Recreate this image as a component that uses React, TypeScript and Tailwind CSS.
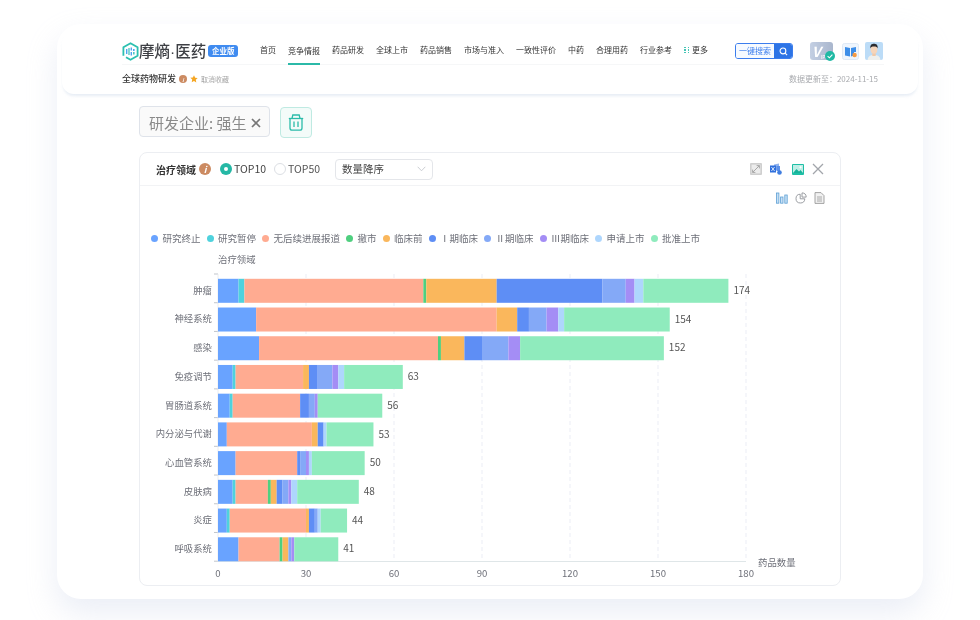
import React from "react";

const C = ["#69a3ff", "#4fd2dd", "#ffab91", "#4fcf7f", "#fab75c", "#5e8ef5", "#84a9f7", "#a48df5", "#aed6fd", "#8febbd"];
const legend = ["研究终止", "研究暂停", "无后续进展报道", "撤市", "临床前", "Ⅰ期临床", "Ⅱ期临床", "Ⅲ期临床", "申请上市", "批准上市"];
const nav = ["首页", "竞争情报", "药品研发", "全球上市", "药品销售", "市场与准入", "一致性评价", "中药", "合理用药", "行业参考"];

const rows: [string, number, number[]][] = [
  ["肿瘤", 174, [7, 2, 61, 1, 24, 36, 8, 3, 3, 29]],
  ["神经系统", 154, [13, 0, 82, 0, 7, 4, 6, 4, 2, 36]],
  ["感染", 152, [14, 0, 61, 1, 8, 6, 9, 4, 0, 49]],
  ["免疫调节", 63, [5, 1, 23, 0, 2, 3, 5, 2, 2, 20]],
  ["胃肠道系统", 56, [4, 1, 23, 0, 0, 3, 2, 1, 0, 22]],
  ["内分泌与代谢", 53, [3, 0, 29, 0, 2, 2, 0, 0, 1, 16]],
  ["心血管系统", 50, [6, 0, 21, 0, 0, 1, 2, 1, 1, 18]],
  ["皮肤病", 48, [5, 1, 11, 1, 2, 2, 2, 1, 2, 21]],
  ["炎症", 44, [3, 1, 26, 0, 1, 2, 1, 0, 1, 9]],
  ["呼吸系统", 41, [7, 0, 14, 1, 2, 0, 1, 1, 0, 15]],
];

const X0 = 218;
const K = 528 / 180;
const T0 = 275;
const P = 28.72;

function Chart() {
  return (
    <svg viewBox="140 248 700 335" className="block h-[335px] w-[700px]">
      <text x="218" y="264" fontSize="9.4" fill="#6e7079">治疗领域</text>
      {[30, 60, 90, 120, 150, 180].map((v) => (
        <line key={v} x1={X0 + v * K} x2={X0 + v * K} y1={T0} y2="562" stroke="#e6e8f2" strokeWidth="0.8" strokeDasharray="4 3" />
      ))}
      {rows.map((_, i) => (
        <line key={i} x1="214" x2="218" y1={T0 + i * P} y2={T0 + i * P} stroke="#a8adb5" strokeWidth="0.7" />
      ))}
      <line x1="214" x2="218" y1="562.2" y2="562.2" stroke="#a8adb5" strokeWidth="0.7" />
      <line x1="218" x2="218" y1={T0} y2="562.5" stroke="#e4e8ec" strokeWidth="0.8" />
      <line x1="218" x2="746" y1="562.5" y2="562.5" stroke="#dfe6e8" strokeWidth="1" />
      {rows.map(([name, total, segs], i) => {
        const top = T0 + i * P + 4.8;
        const cy = top + 11.5;
        let acc = 0;
        return (
          <g key={name}>
            <text x="212" y={cy + 3.4} textAnchor="end" fontSize="9.4" fill="#6e7079">{name}</text>
            {segs.map((s, j) => {
              const x = X0 + acc * K;
              acc += s;
              return s > 0 ? <rect key={j} x={x} y={top} width={s * K} height="24" fill={C[j]} /> : null;
            })}
            <text x={X0 + total * K + 5} y={cy + 3.6} fontSize="10" fill="#555555">{total}</text>
          </g>
        );
      })}
      {[0, 30, 60, 90, 120, 150, 180].map((v) => (
        <text key={v} x={X0 + v * K} y="578" textAnchor="middle" fontSize="9.6" fill="#6e7079">{v}</text>
      ))}
      <text x="758" y="567" fontSize="9.4" fill="#6e7079">药品数量</text>
    </svg>
  );
}

function Logo() {
  return (
    <svg width="17" height="19" viewBox="0 0 17 19" className="shrink-0">
      <path d="M8.5 1.2 15.6 5.3V13.7L8.5 17.8 1.4 13.7V5.3Z" fill="none" stroke="#2cc0b0" strokeWidth="1.8" strokeLinejoin="round" strokeDasharray="30 3 40" />
      <g fill="#4ea4ee">
        <rect x="4" y="7" width="1.4" height="5" />
        <rect x="6.3" y="6" width="1.4" height="7" fill="#4fc9c4" />
        <rect x="8.6" y="5.5" width="1.4" height="3" />
        <rect x="8.6" y="10" width="1.4" height="3.5" />
        <rect x="11" y="7" width="1.6" height="2" />
        <rect x="11" y="10" width="1.6" height="2.5" fill="#4fc9c4" />
      </g>
    </svg>
  );
}

function Vip() {
  return (
    <div className="relative h-[18px] w-[23px]">
      <div className="flex h-[18px] w-[23px] items-end rounded-[3px] bg-gradient-to-r from-[#c3cfe3] to-[#a9b6cd] pl-[2px]">
        <span className="text-[14px] leading-[17px] font-bold italic text-white">V</span>
        <span className="text-[5px] leading-[7px] text-white">IP</span>
      </div>
      <svg width="10" height="10" viewBox="0 0 10 10" className="absolute right-[-2px] bottom-[-1px]">
        <circle cx="5" cy="5" r="5" fill="#1fb9a4" />
        <path d="M2.6 5.1 4.4 6.8 7.4 3.6" fill="none" stroke="#fff" strokeWidth="1.1" />
      </svg>
    </div>
  );
}

function Book() {
  return (
    <svg width="17" height="17" viewBox="0 0 17 17">
      <rect x="0.5" y="0.5" width="16" height="16" rx="2" fill="#eef5fd" stroke="#dfe9f5" />
      <path d="M3 4 8 5V13.5L3 12.5Z" fill="#3d8ee8" />
      <path d="M9 5 14 4V9H12V12.5L9 13.5Z" fill="#3d8ee8" />
      <circle cx="12.6" cy="12" r="2.2" fill="#f59a42" />
    </svg>
  );
}

function Avatar() {
  return (
    <svg width="18" height="18" viewBox="0 0 18 18">
      <rect width="18" height="18" rx="2" fill="#bcdcf7" />
      <path d="M2.5 18c.5-4 3-5 6.5-5s6 1 6.5 5Z" fill="#eef0ee" />
      <rect x="7.3" y="10" width="3.4" height="4" fill="#f0c9a8" />
      <ellipse cx="9" cy="7.5" rx="3.4" ry="4.2" fill="#f6d5ba" />
      <path d="M5.3 6.5C5 2.5 7 1.8 9 1.8s4 .7 3.7 4.7c-.6-1.5-1.5-2-3.7-2s-3.1.5-3.7 2Z" fill="#2b2b2e" />
    </svg>
  );
}

function Info({ size }: { size: number }) {
  return (
    <span
      className="flex shrink-0 items-center justify-center rounded-full bg-[#cc8b62] font-bold italic leading-none text-white"
      style={{ width: size, height: size, fontSize: size - 3 }}
    >
      i
    </span>
  );
}

function TopIcons() {
  return (
    <div className="flex items-center">
      <svg width="12" height="12" viewBox="0 0 12 12">
        <rect width="12" height="12" rx="1" fill="#cfcfcf" />
        <rect x="1.6" y="1.6" width="8.8" height="8.8" fill="#ececec" />
        <path d="M2.6 9.4 9.4 2.6" stroke="#a8a8a8" strokeWidth="1" />
        <path d="M6.6 2.6h2.8v2.8M5.4 9.4H2.6V6.6" fill="none" stroke="#a8a8a8" strokeWidth="1" />
      </svg>
      <svg width="12" height="12" viewBox="0 0 12 12" className="ml-[8px]">
        <path d="M4 1.5 9 0.5V7H4Z" fill="#8fb2ee" />
        <rect x="0" y="2.5" width="6" height="7" fill="#2f6fdc" />
        <path d="M1.4 4 4.6 8M4.6 4 1.4 8" stroke="#fff" strokeWidth="0.8" />
        <rect x="6.5" y="3" width="3.5" height="5" fill="#5b8fe8" />
        <circle cx="9.5" cy="9.5" r="2.3" fill="#3f7de0" />
      </svg>
      <svg width="12" height="11" viewBox="0 0 12 11" className="ml-[10px]">
        <rect width="12" height="11" rx="1" fill="#1ebfa6" />
        <rect x="1" y="1" width="10" height="8" fill="#bfeee6" />
        <path d="M1 9 4.5 5 7 7.5 8.5 6 11 9Z" fill="#17b39a" />
        <circle cx="8.5" cy="3.3" r="1.1" fill="#fff" />
      </svg>
      <svg width="12" height="12" viewBox="0 0 12 12" className="ml-[8px]">
        <path d="M1 1 11 11M11 1 1 11" stroke="#a2a5ab" strokeWidth="1.3" />
      </svg>
    </div>
  );
}

function ViewIcons() {
  return (
    <div className="flex items-center justify-end gap-[7px] pr-[15px] pt-[6px] pb-0">
      <svg width="12" height="12" viewBox="0 0 12 12">
        <rect x="0.5" y="1" width="2.4" height="10.2" fill="#c6e0f5" stroke="#5c9fd4" strokeWidth="0.8" />
        <rect x="4.6" y="5" width="2.4" height="6.2" fill="#c6e0f5" stroke="#5c9fd4" strokeWidth="0.8" />
        <rect x="8.8" y="3" width="2.4" height="8.2" fill="#c6e0f5" stroke="#5c9fd4" strokeWidth="0.8" />
      </svg>
      <svg width="12" height="12" viewBox="0 0 12 12">
        <path d="M5.2 2.2a4.4 4.4 0 1 0 4.6 4.6H5.2Z" fill="none" stroke="#909399" strokeWidth="0.9" />
        <path d="M7 .9v4.2h4.2A4.3 4.3 0 0 0 7 .9Z" fill="none" stroke="#909399" strokeWidth="0.9" />
      </svg>
      <svg width="11" height="12" viewBox="0 0 11 12">
        <path d="M1 .6H7L10 3.6V11.4H1Z" fill="#f1f1f1" stroke="#9a9a9a" strokeWidth="0.9" />
        <path d="M3 5h5M3 7h5M3 9h5" stroke="#9a9a9a" strokeWidth="0.8" />
      </svg>
    </div>
  );
}

export default function App() {
  return (
    <div className="h-[620px] w-[980px] overflow-hidden bg-white pt-[24px] font-['Noto_Sans_CJK_SC','Noto_Sans',sans-serif] text-[#333] blur-[0.3px]">
      <div className="mx-auto h-[575px] w-[866px] rounded-[24px] bg-white pt-[8px] shadow-[0_14px_30px_rgba(190,200,225,0.3)]">
        {/* header */}
        <div className="mx-[5px] h-[62px] rounded-[12px] bg-white shadow-[0_3px_3px_-1px_rgba(195,210,230,0.4)]">
          <div className="ml-[60px] mr-[34px] flex h-[33px] items-center whitespace-nowrap border-b border-[#f6f7f8] pt-[6px]">
            <div className="flex w-[138px] shrink-0 items-center">
              <Logo />
              <span className="text-[15.5px] leading-none font-medium text-[#3d3f44]">
                摩熵<span className="font-['Liberation_Sans']">·</span>医药
              </span>
              <span className="ml-[2px] flex h-[12px] w-[30px] shrink-0 items-center justify-center rounded-[3px] bg-[#3f8bf0] text-[7.5px] font-bold text-white">企业版</span>
            </div>
            <nav className="flex h-full shrink-0 items-stretch gap-[12px] text-[8px] text-[#333]">
              {nav.map((n) => (
                <div key={n} className={n === "竞争情报" ? "-mb-[1px] flex items-center border-b-2 border-[#2bb9a8]" : "flex items-center pb-[2px]"}>
                  {n}
                </div>
              ))}
              <div className="flex items-center gap-[3px] pb-[2px]">
                <span className="grid grid-cols-2 gap-x-[2px] gap-y-[1px]">
                  {[0, 1, 2, 3, 4, 5].map((i) => (
                    <span key={i} className="h-[1.5px] w-[1.5px] bg-[#43c5b5]" />
                  ))}
                </span>
                更多
              </div>
            </nav>
            <div className="ml-[27px] flex h-[16px] w-[58px] shrink-0 overflow-hidden rounded-[3px] border border-[#3b7ded]">
              <span className="flex flex-1 items-center justify-center bg-[#f6faff] text-[8px] text-[#3b7ded]">一键搜索</span>
              <span className="flex w-[18px] items-center justify-center bg-[#2d74e6]">
                <svg width="9" height="9" viewBox="0 0 10 10">
                  <circle cx="4.4" cy="4.4" r="3.2" fill="none" stroke="#fff" strokeWidth="1.2" />
                  <path d="M6.8 6.8 9 9" stroke="#fff" strokeWidth="1.2" />
                </svg>
              </span>
            </div>
            <div className="ml-[17px] flex shrink-0 items-center gap-[9px]">
              <Vip />
              <Book />
            </div>
            <div className="ml-[6px] shrink-0"><Avatar /></div>
          </div>
          <div className="ml-[60px] mr-[40px] flex h-[28px] items-center">
            <span className="text-[9px] font-medium text-[#333]">全球药物研发</span>
            <span className="ml-[3px]"><Info size={8} /></span>
            <svg width="8" height="8" viewBox="0 0 24 24" className="ml-[3px]">
              <path d="M12 1l3.4 7.2 7.6 1-5.6 5.4 1.4 7.8L12 18l-6.8 3.4 1.4-7.8L1 8.2l7.6-1Z" fill="#f5a623" />
            </svg>
            <span className="ml-[3px] text-[7px] text-[#a5a5a5]">取消收藏</span>
            <span className="ml-auto text-[8px] text-[#a9abaf]">数据更新至：2024-11-15</span>
          </div>
        </div>

        {/* filter */}
        <div className="ml-[82px] mt-[12px] flex items-start gap-[10px]">
          <div className="flex h-[31px] w-[131px] items-center whitespace-nowrap rounded-[4px] border border-[#dfe3ea] bg-[#fafafa] pl-[9px] pt-[3px] text-[15px] text-[#8a8a8a]">
            研发企业: 强生
            <svg width="10" height="10" viewBox="0 0 10 10" className="ml-[4px]">
              <path d="M1 1 9 9M9 1 1 9" stroke="#777" strokeWidth="1.7" />
            </svg>
          </div>
          <div className="mt-[1px] flex h-[31px] w-[32px] items-center justify-center rounded-[4px] border border-[#bfeae2] bg-[#f3fbf9]">
            <svg width="16" height="17" viewBox="0 0 16 17" fill="none" stroke="#2cbcaa" strokeWidth="1.3">
              <path d="M.8 4.5h14.4" />
              <path d="M4 4.5 4.8 1h6.4L12 4.5" />
              <path d="M2 4.5V14a2.2 2.2 0 0 0 2.2 2.2h7.6A2.2 2.2 0 0 0 14 14V4.5" />
              <path d="M6 7.5v5.5M10 7.5v5.5" />
            </svg>
          </div>
        </div>

        {/* chart card */}
        <div className="ml-[82px] mt-[14px] h-[434px] w-[702px] rounded-[8px] border border-[#eceef2]">
          <div className="flex h-[33px] items-center whitespace-nowrap border-b border-[#f2f3f5] pl-[16px] pr-[16px]">
            <span className="text-[10px] font-bold text-[#333]">治疗领域</span>
            <span className="ml-[3px]"><Info size={12} /></span>
            <span className="ml-[9px] flex h-[12px] w-[12px] items-center justify-center rounded-full bg-[#25b8a5]">
              <span className="h-[4px] w-[4px] rounded-full bg-white" />
            </span>
            <span className="ml-[2px] w-[32px] text-[10.5px] text-[#444]">TOP10</span>
            <span className="ml-[8px] h-[12px] w-[12px] rounded-full border border-[#dcdfe4]" />
            <span className="ml-[2px] w-[32px] text-[10.5px] text-[#555]">TOP50</span>
            <div className="ml-[15px] flex h-[21px] w-[98px] items-center justify-between rounded-[4px] border border-[#e4e6ea] pl-[6px] pr-[6px] text-[10.5px] text-[#444]">
              数量降序
              <svg width="9" height="6" viewBox="0 0 9 6">
                <path d="M.7.8 4.5 4.8 8.3.8" fill="none" stroke="#c5c8ce" strokeWidth="0.9" />
              </svg>
            </div>
            <div className="ml-auto"><TopIcons /></div>
          </div>
          <ViewIcons />
          <div className="mt-[27px] mb-[2px] ml-[11px] flex h-[14px] items-center gap-[6px] whitespace-nowrap text-[9.5px] text-[#6e7079]">
            {legend.map((l, i) => (
              <div key={l} className="flex items-center gap-[4.5px]">
                <span className="h-[7px] w-[7px] rounded-full" style={{ background: C[i] }} />
                <span style={{ width: l.length * 9.5 }}>{l}</span>
              </div>
            ))}
          </div>
          <Chart />
        </div>
      </div>
    </div>
  );
}
